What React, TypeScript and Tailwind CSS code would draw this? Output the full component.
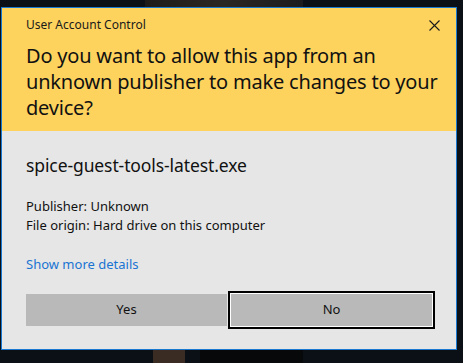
import React from 'react'

const font = { fontFamily: '"Noto Sans", "Open Sans", sans-serif' }

function CloseIcon() {
  return (
    <svg width="11" height="11" viewBox="0 0 11 11" className="block">
      <path d="M0.5 0.5 L10.5 10.5 M10.5 0.5 L0.5 10.5" stroke="#1a1a1a" strokeWidth="1.1" />
    </svg>
  )
}

export default function App() {
  return (
    <div className="relative w-[463px] h-[363px] overflow-hidden bg-[#0b1017]" style={font}>
      {/* wallpaper bits peeking around the dialog */}
      <div className="absolute left-[145px] top-0 w-[158px] h-[7px] bg-gradient-to-r from-[#1d1b19] via-[#2a2623] to-[#1b1c1e]" />
      <div className="absolute left-[153px] top-[350px] w-[32px] h-[13px] bg-[#3a2c22]" />
      <div className="absolute left-[200px] top-[350px] w-[103px] h-[13px] bg-[#07080a]" />

      <div className="relative ml-[1px] pt-[7px]">
        <div className="w-[456px] h-[343px] border border-[#1979d0] flex flex-col">
          {/* yellow header */}
          <div className="bg-[#fdd35e] h-[123px] shrink-0 flex flex-col pt-[8px]">
            <div className="flex items-center justify-between pl-[24px] pr-[16px] h-[16px] mt-[1px]">
              <span className="text-[12px] leading-[16px] text-[#1a1a1a]">User Account Control</span>
              <CloseIcon />
            </div>
            <p className="mt-[10px] pl-[24px] pr-[6px] text-[20px] leading-[26px] text-[#111] tracking-[-0.2px]">
              Do you want to allow this app from an unknown publisher to make changes to your device?
            </p>
          </div>

          {/* gray body */}
          <div className="flex-1 bg-[#e6e6e6] px-[24px] pt-[22px] flex flex-col">
            <div className="text-[17.5px] leading-[24px] text-[#111] tracking-[-0.1px]">spice-guest-tools-latest.exe</div>
            <div className="mt-[20px] text-[13px] leading-[19px] text-[#111]">
              <div>Publisher: Unknown</div>
              <div>File origin: Hard drive on this computer</div>
            </div>
            <div className="mt-[20px] text-[13px] leading-[19px] text-[#1a74d2]">Show more details</div>
            <div className="mt-[20px] flex gap-[4px]">
              <button className="w-[201px] h-[32px] bg-[#b9b9b9] text-[13px] text-[#111]">Yes</button>
              <button className="w-[201px] h-[32px] bg-[#b9b9b9] text-[13px] text-[#111] shadow-[0_0_0_1px_#ffffff,0_0_0_3px_#000000]">
                No
              </button>
            </div>
          </div>
        </div>
      </div>
    </div>
  )
}
